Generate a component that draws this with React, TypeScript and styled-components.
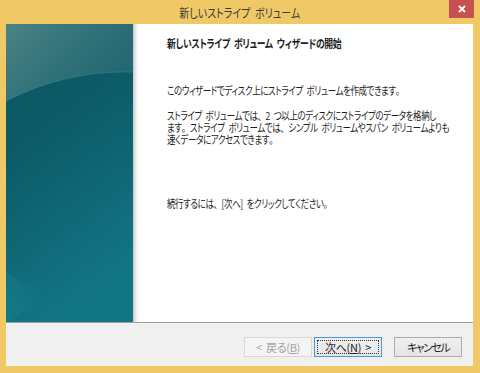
import React from "react";
import styled, { createGlobalStyle } from "styled-components";

const Global = createGlobalStyle`
  html, body { margin: 0; padding: 0; background: #f0c866; }
  #root { width: 480px; height: 373px; overflow: hidden; }
  * { box-sizing: border-box; }
`;

const FONT = `"Noto Sans CJK JP", "Noto Sans", sans-serif`;

const Window = styled.div`
  width: 480px;
  height: 373px;
  background: #f0c866;
  display: flex;
  flex-direction: column;
  padding: 0 7px 7px 6px;
  font-family: ${FONT};
  font-feature-settings: "palt";
`;

const TitleBar = styled.div`
  height: 24px;
  margin: 0 -7px 0 -6px;
  display: grid;
  grid-template-columns: 1fr auto 1fr;
  align-items: start;
`;

const Title = styled.div`
  grid-column: 2;
  font-size: 12px;
  line-height: 16px;
  padding-top: 5px;
  color: #3a3a3a;
  word-spacing: 3px;
  transform: scaleX(0.83);
  transform-origin: center top;
`;

const CloseButton = styled.div`
  grid-column: 3;
  justify-self: end;
  margin-right: 6px;
  width: 25px;
  height: 18px;
  background: #c75050;
  display: flex;
  align-items: center;
  justify-content: center;
`;

const Content = styled.div`
  flex: 1;
  display: flex;
  flex-direction: column;
  background: #f0f0f0;
`;

const Main = styled.div`
  height: 299px;
  display: flex;
  background: #fff;
  border-bottom: 1px solid #a0a0a0;
  overflow: hidden;
`;

const SidePanel = styled.div`
  width: 127px;
  flex: none;
  display: flex;
`;

const Shadow = styled.div`
  width: 5px;
  flex: none;
  background: linear-gradient(to right, #c8c8c8, #ececec 60%, #ffffff);
`;

const TextCol = styled.div`
  flex: 1;
  min-width: 0;
  padding: 12px 0 0 29px;
  color: #1e1e1e;
`;

const TextBlock = styled.div`
  transform: scaleX(0.77);
  transform-origin: left top;
  font-size: 11px;
  line-height: 12px;
  letter-spacing: -0.5px;
  word-spacing: 3px;
`;

const Heading = styled.div`
  font-weight: bold;
  font-size: 11.5px;
  line-height: 14px;
  margin-bottom: 34px;
  letter-spacing: -0.4px;
  white-space: nowrap;
`;

const Para = styled.p<{ $gap?: number }>`
  margin: 0 0 ${(p) => p.$gap ?? 12}px 0;
  white-space: nowrap;
`;

/* full-width punctuation, as in the original dialog font */
const Pn = styled.span`
  font-feature-settings: normal;
`;

const ButtonBar = styled.div`
  flex: 1;
  display: flex;
  justify-content: flex-end;
  align-items: flex-start;
  padding: 14px 11px 0 0;
`;

const Button = styled.div<{ $variant?: "disabled" | "default" | "normal"; $gapLeft?: number }>`
  width: 68px;
  height: 20px;
  margin-left: ${(p) => p.$gapLeft ?? 0}px;
  font-size: 11px;
  display: flex;
  align-items: center;
  justify-content: center;
  position: relative;
  color: ${(p) => (p.$variant === "disabled" ? "#a3a3a3" : "#1e1e1e")};
  border: 1px solid
    ${(p) =>
      p.$variant === "disabled" ? "#d9d9d9" : p.$variant === "default" ? "#4a9ae0" : "#acacac"};
  background: ${(p) =>
    p.$variant === "disabled"
      ? "#f4f4f4"
      : "linear-gradient(to bottom, #f0f0f0, #e5e5e5)"};
`;

const Label = styled.span<{ $ls?: number }>`
  letter-spacing: ${(p) => p.$ls ?? -0.3}px;
  word-spacing: 2px;
  white-space: pre;
`;

const FocusRect = styled.span`
  position: absolute;
  inset: 2px;
  border: 1px dotted #333;
  pointer-events: none;
`;

const U = styled.span`
  text-decoration: underline;
`;

function PanelArt() {
  return (
    <svg width="127" height="300" viewBox="0 0 127 300" style={{ display: "block" }}>
      <defs>
        <linearGradient id="base" x1="0" y1="0" x2="0.3" y2="1">
          <stop offset="0" stopColor="#0b5661" />
          <stop offset="0.4" stopColor="#0c5b67" />
          <stop offset="0.75" stopColor="#106978" />
          <stop offset="1" stopColor="#127584" />
        </linearGradient>
        <linearGradient id="gloss" x1="0" y1="0" x2="1" y2="0.6">
          <stop offset="0" stopColor="#4a8384" />
          <stop offset="0.5" stopColor="#33737a" />
          <stop offset="1" stopColor="#226672" />
        </linearGradient>
        <linearGradient id="wedge" x1="0" y1="0" x2="1" y2="0">
          <stop offset="0" stopColor="#168a92" stopOpacity="0.7" />
          <stop offset="1" stopColor="#168a92" stopOpacity="0" />
        </linearGradient>
      </defs>
      <rect width="127" height="300" fill="url(#base)" />
      <path d="M0 0 H127 V48 Q60 46 0 77 Z" fill="url(#gloss)" />
      <path d="M0 77 Q60 46 127 48" fill="none" stroke="#4b8a8d" strokeOpacity="0.45" strokeWidth="1" />
      <path d="M0 248 L40 272 L0 300 Z" fill="url(#wedge)" opacity="0.5" />
    </svg>
  );
}

export default function App() {
  return (
    <>
      <Global />
      <Window>
        <TitleBar>
          <Title>新しいストライプ ボリューム</Title>
          <CloseButton>
            <svg width="8" height="8" viewBox="0 0 8 8">
              <path d="M1 1 L7 7 M7 1 L1 7" stroke="#fff" strokeWidth="1.8" />
            </svg>
          </CloseButton>
        </TitleBar>
        <Content>
          <Main>
            <SidePanel>
              <PanelArt />
            </SidePanel>
            <Shadow />
            <TextCol>
              <TextBlock>
                <Heading>新しいストライプ ボリューム ウィザードの開始</Heading>
                <Para $gap={13}>
                  このウィザードでディスク上にストライプ ボリュームを作成できます<Pn>。</Pn>
                </Para>
                <Para $gap={52}>
                  ストライプ ボリュームでは<Pn>、</Pn>2 つ以上のディスクにストライプのデータを格納し
                  <br />
                  ます<Pn>。</Pn>ストライプ ボリュームでは<Pn>、</Pn>シンプル ボリュームやスパン ボリュームよりも
                  <br />
                  速くデータにアクセスできます<Pn>。</Pn>
                </Para>
                <Para>
                  続行するには<Pn>、</Pn>[次へ] をクリックしてください<Pn>。</Pn>
                </Para>
              </TextBlock>
            </TextCol>
          </Main>
          <ButtonBar>
            <Button $variant="disabled">
              <Label>
                &lt; 戻る(<U>B</U>)
              </Label>
            </Button>
            <Button $variant="default" $gapLeft={2}>
              <Label>
                次へ(<U>N</U>) &gt;
              </Label>
              <FocusRect />
            </Button>
            <Button $variant="normal" $gapLeft={12}>
              <Label $ls={-1.6}>キャンセル</Label>
            </Button>
          </ButtonBar>
        </Content>
      </Window>
    </>
  );
}
